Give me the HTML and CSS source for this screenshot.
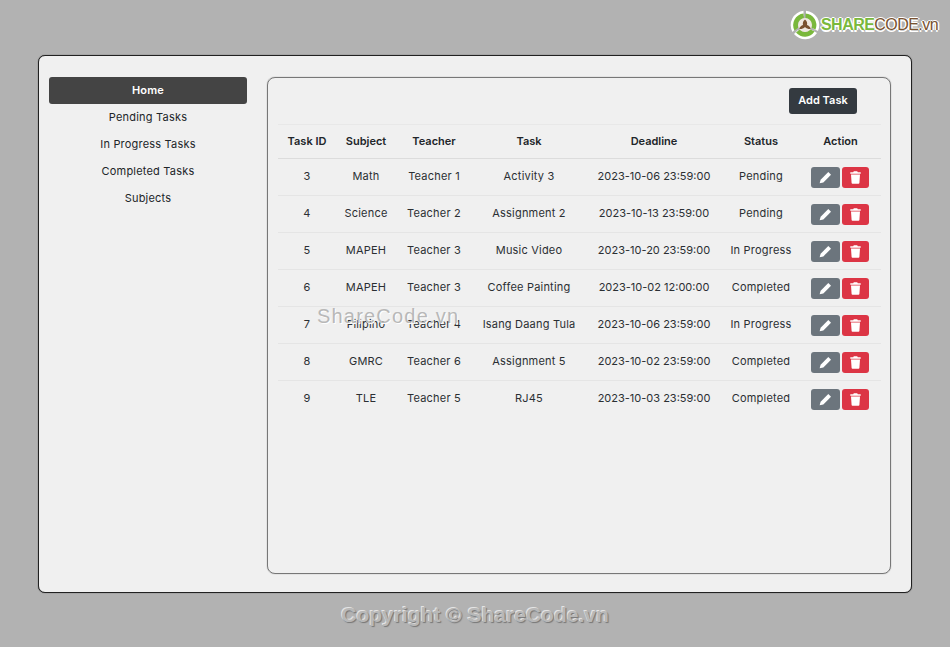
FILE: index.html
```html
<!DOCTYPE html>
<html lang="en">
<head>
<meta charset="utf-8">
<title>Tasks</title>
<link rel="stylesheet" href="styles.css">
</head>
<body>
<div class="logo">
  <svg class="logo-icon" width="30" height="30" viewBox="0 0 30 30">
    <path d="M16 .800A14.300 14.300 0 0 1 28 21L23 18.500A9 9 0 0 0 16 6Z" fill="#fff"/>
    <path d="M27 23A14.300 14.300 0 0 1 4 24L8 20A9 9 0 0 0 22 20Z" fill="#fff"/>
    <path d="M2.500 22A14.300 14.300 0 0 1 13.500.800L13.500 6A9 9 0 0 0 6.500 18Z" fill="#fff"/>
    <path d="M15.500 3.500A11.500 11.500 0 0 1 25.500 19.500L21 17.500A7 7 0 0 0 15.500 8Z" fill="#7ab83c"/>
    <path d="M24.500 21.500A11.500 11.500 0 0 1 6 22.500L9.800 19.500A7 7 0 0 0 20.500 19.500Z" fill="#7ab83c"/>
    <path d="M4.500 20.500A11.500 11.500 0 0 1 13.500 3.600L13.800 8.200A7 7 0 0 0 8.500 17.500Z" fill="#7ab83c"/>
    <circle cx="15" cy="15" r="7" fill="#efe9e0"/>
    <path d="M15 9.500C17 11 17.500 13 17 15C18.800 15.500 20.300 17 20.800 19C18.500 19.200 16.500 18.500 15 17C13.500 18.500 11.500 19.200 9.200 19C9.700 17 11.200 15.500 13 15C12.500 13 13 11 15 9.500Z" fill="#7a5230"/>
  </svg>
  <span class="logo-text"><b class="logo-share">SHARE</b>CODE.vn</span>
</div>
<div class="shell">
  <div class="panel">
    <nav class="sidebar">
      <a class="nav-item active">Home</a>
      <a class="nav-item">Pending Tasks</a>
      <a class="nav-item">In Progress Tasks</a>
      <a class="nav-item">Completed Tasks</a>
      <a class="nav-item">Subjects</a>
    </nav>
    <main class="content">
      <div class="toolbar"><button class="add-btn">Add Task</button></div>
      <table class="tasks">
        <colgroup>
          <col class="c1"><col class="c2"><col class="c3"><col class="c4"><col class="c5"><col class="c6"><col class="c7">
        </colgroup>
        <thead>
          <tr><th>Task ID</th><th>Subject</th><th>Teacher</th><th>Task</th><th>Deadline</th><th>Status</th><th>Action</th></tr>
        </thead>
        <tbody>
          <tr><td>3</td><td>Math</td><td>Teacher 1</td><td>Activity 3</td><td class="date">2023-10-06 23:59:00</td><td>Pending</td><td class="act"><button class="ib edit"><svg width="13" height="13" viewBox="0 0 12 12"><path class="pen" d="M8.600.900 11.100 3.400 4 10.500.600 11.400 1.500 8Z"/></svg></button><button class="ib del"><svg width="11" height="13" viewBox="0 0 11 13"><path class="pen" d="M3.800.300H7.200L7.800 1.300H10.700V2.700H.300V1.300H3.200ZM1 3.600H10L9.400 12.100Q9.300 12.800 8.600 12.800H2.400Q1.700 12.800 1.600 12.100Z"/></svg></button></td></tr>
          <tr><td>4</td><td>Science</td><td>Teacher 2</td><td>Assignment 2</td><td class="date">2023-10-13 23:59:00</td><td>Pending</td><td class="act"><button class="ib edit"><svg width="13" height="13" viewBox="0 0 12 12"><path class="pen" d="M8.600.900 11.100 3.400 4 10.500.600 11.400 1.500 8Z"/></svg></button><button class="ib del"><svg width="11" height="13" viewBox="0 0 11 13"><path class="pen" d="M3.800.300H7.200L7.800 1.300H10.700V2.700H.300V1.300H3.200ZM1 3.600H10L9.400 12.100Q9.300 12.800 8.600 12.800H2.400Q1.700 12.800 1.600 12.100Z"/></svg></button></td></tr>
          <tr><td>5</td><td>MAPEH</td><td>Teacher 3</td><td>Music Video</td><td class="date">2023-10-20 23:59:00</td><td>In Progress</td><td class="act"><button class="ib edit"><svg width="13" height="13" viewBox="0 0 12 12"><path class="pen" d="M8.600.900 11.100 3.400 4 10.500.600 11.400 1.500 8Z"/></svg></button><button class="ib del"><svg width="11" height="13" viewBox="0 0 11 13"><path class="pen" d="M3.800.300H7.200L7.800 1.300H10.700V2.700H.300V1.300H3.200ZM1 3.600H10L9.400 12.100Q9.300 12.800 8.600 12.800H2.400Q1.700 12.800 1.600 12.100Z"/></svg></button></td></tr>
          <tr><td>6</td><td>MAPEH</td><td>Teacher 3</td><td>Coffee Painting</td><td class="date">2023-10-02 12:00:00</td><td>Completed</td><td class="act"><button class="ib edit"><svg width="13" height="13" viewBox="0 0 12 12"><path class="pen" d="M8.600.900 11.100 3.400 4 10.500.600 11.400 1.500 8Z"/></svg></button><button class="ib del"><svg width="11" height="13" viewBox="0 0 11 13"><path class="pen" d="M3.800.300H7.200L7.800 1.300H10.700V2.700H.300V1.300H3.200ZM1 3.600H10L9.400 12.100Q9.300 12.800 8.600 12.800H2.400Q1.700 12.800 1.600 12.100Z"/></svg></button></td></tr>
          <tr><td>7</td><td>Filipino</td><td>Teacher 4</td><td>Isang Daang Tula</td><td class="date">2023-10-06 23:59:00</td><td>In Progress</td><td class="act"><button class="ib edit"><svg width="13" height="13" viewBox="0 0 12 12"><path class="pen" d="M8.600.900 11.100 3.400 4 10.500.600 11.400 1.500 8Z"/></svg></button><button class="ib del"><svg width="11" height="13" viewBox="0 0 11 13"><path class="pen" d="M3.800.300H7.200L7.800 1.300H10.700V2.700H.300V1.300H3.200ZM1 3.600H10L9.400 12.100Q9.300 12.800 8.600 12.800H2.400Q1.700 12.800 1.600 12.100Z"/></svg></button></td></tr>
          <tr><td>8</td><td>GMRC</td><td>Teacher 6</td><td>Assignment 5</td><td class="date">2023-10-02 23:59:00</td><td>Completed</td><td class="act"><button class="ib edit"><svg width="13" height="13" viewBox="0 0 12 12"><path class="pen" d="M8.600.900 11.100 3.400 4 10.500.600 11.400 1.500 8Z"/></svg></button><button class="ib del"><svg width="11" height="13" viewBox="0 0 11 13"><path class="pen" d="M3.800.300H7.200L7.800 1.300H10.700V2.700H.300V1.300H3.200ZM1 3.600H10L9.400 12.100Q9.300 12.800 8.600 12.800H2.400Q1.700 12.800 1.600 12.100Z"/></svg></button></td></tr>
          <tr><td>9</td><td>TLE</td><td>Teacher 5</td><td>RJ45</td><td class="date">2023-10-03 23:59:00</td><td>Completed</td><td class="act"><button class="ib edit"><svg width="13" height="13" viewBox="0 0 12 12"><path class="pen" d="M8.600.900 11.100 3.400 4 10.500.600 11.400 1.500 8Z"/></svg></button><button class="ib del"><svg width="11" height="13" viewBox="0 0 11 13"><path class="pen" d="M3.800.300H7.200L7.800 1.300H10.700V2.700H.300V1.300H3.200ZM1 3.600H10L9.400 12.100Q9.300 12.800 8.600 12.800H2.400Q1.700 12.800 1.600 12.100Z"/></svg></button></td></tr>
        </tbody>
      </table>
    </main>
  </div>
</div>
<div class="watermark">ShareCode.vn</div>
<footer class="copyright">Copyright © ShareCode.vn</footer>
</body>
</html>
```
FILE: styles.css
```css
* { box-sizing: border-box; }
html, body { margin: 0; height: 100%; }
body {
  background: #b2b2b2;
  font-family: "Inter", "Open Sans", sans-serif;
  font-size: 11px;
  color: #212529;
  overflow: hidden;
  position: relative;
}
.logo {
  position: absolute;
  top: 10px;
  left: 790px;
  display: flex;
  align-items: center;
  gap: 1px;
}
.logo-text {
  font-family: "Liberation Sans", sans-serif;
  font-size: 16px;
  letter-spacing: -0.55px;
  color: #7a5230;
  text-shadow: 1.5px 0 0 #fff, -1.5px 0 0 #fff, 0 1.5px 0 #fff, 0 -1.5px 0 #fff;
}
.logo-share { color: #7ab83c; font-weight: 700; }
.shell { padding: 55px 38px 0; }
.panel {
  height: 538px;
  background: #f0f0f0;
  border: 1px solid #212121;
  border-radius: 7px;
  box-shadow: 0 0 1px rgba(0,0,0,.7);
  padding: 21px 20px 18px 10px;
  display: flex;
  gap: 20px;
}
.sidebar { width: 198px; flex: none; display: flex; flex-direction: column; }
.nav-item {
  height: 27px;
  display: flex;
  align-items: center;
  justify-content: center;
  padding-bottom: 2px;
  color: #212529;
  border-radius: 3px;
  font-weight: 400;
  letter-spacing: 0.2px;
}
.nav-item.active { background: #444; color: #fff; font-weight: 600; }
.content {
  flex: 1;
  min-width: 0;
  border: 1px solid #777;
  border-radius: 8px;
  box-shadow: 0 0 1px rgba(0,0,0,.5);
  padding: 10px 9px 10px 10px;
}
.toolbar { display: flex; justify-content: flex-end; padding-right: 24px; height: 36px; }
.add-btn {
  width: 68px;
  height: 26px;
  background: #343a40;
  color: #fff;
  border: 0;
  border-radius: 3px;
  font: 600 11px "Inter", sans-serif;
  padding: 0 0 2px;
}
.tasks { width: 603px; border-collapse: collapse; table-layout: fixed; }
.c1 { width: 58px; } .c2 { width: 60px; } .c3 { width: 76px; } .c4 { width: 114px; }
.c5 { width: 136px; } .c6 { width: 78px; } .c7 { width: 81px; }
.tasks th, .tasks td { text-align: center; padding: 0 0 3px; border-top: 1px solid #e5e5e5; white-space: nowrap; }
.tasks th { height: 34px; font-weight: 600; color: #212529; border-bottom: 1px solid #dcdcdc; border-top-color: #e8e8e8; padding-bottom: 2px; }
.tasks td { height: 37px; color: #2b2f33; letter-spacing: 0.2px; }
.tasks tbody tr:first-child td { border-top: 0; }
.tasks td.date { letter-spacing: 0; }
.tasks td.act { font-size: 0; padding: 1px 2px 0 0; }
.ib {
  display: inline-flex;
  align-items: center;
  justify-content: center;
  height: 21px;
  border: 0;
  border-radius: 3px;
  padding: 0;
  vertical-align: middle;
}
.edit { width: 29px; background: #6c757d; margin-right: 2px; }
.del { width: 27px; background: #dc3545; }
.pen { fill: #fff; }
.watermark {
  position: absolute;
  left: 317px;
  top: 305px;
  font: 20px "Liberation Sans", sans-serif;
  letter-spacing: 1.2px;
  color: #b8b8b8;
  text-shadow: 1px 1px 0 #fff;
  white-space: nowrap;
}
.copyright {
  text-align: center;
  margin-top: 10px;
  font: 700 21px "Liberation Sans", sans-serif;
  color: #b8b8b8;
  text-shadow: 1px 1px 1px #777, -1px -1px 0 #e4e4e4;
}
```
